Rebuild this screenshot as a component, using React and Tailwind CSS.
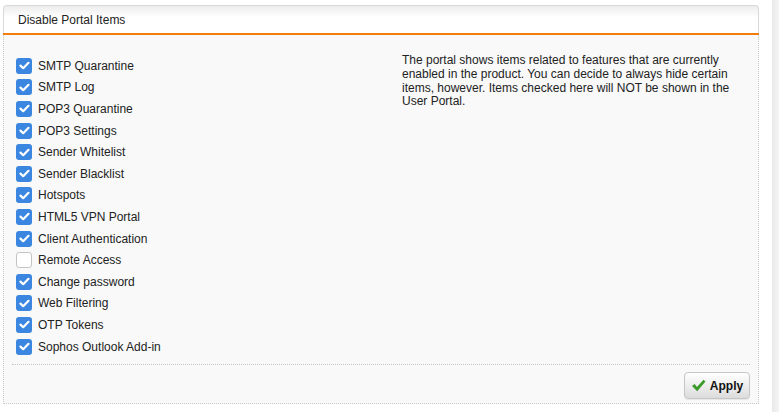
import React from 'react';

const items = [
    { label: 'SMTP Quarantine', checked: true },
    { label: 'SMTP Log', checked: true },
    { label: 'POP3 Quarantine', checked: true },
    { label: 'POP3 Settings', checked: true },
    { label: 'Sender Whitelist', checked: true },
    { label: 'Sender Blacklist', checked: true },
    { label: 'Hotspots', checked: true },
    { label: 'HTML5 VPN Portal', checked: true },
    { label: 'Client Authentication', checked: true },
    { label: 'Remote Access', checked: false },
    { label: 'Change password', checked: true },
    { label: 'Web Filtering', checked: true },
    { label: 'OTP Tokens', checked: true },
    { label: 'Sophos Outlook Add-in', checked: true },
];

const Box = ({ checked }) => (
    checked ? (
        <span className="w-4 h-4 rounded-[3px] bg-[#3a86e0] flex items-center justify-center shrink-0">
            <svg width="11" height="9" viewBox="0 0 11 9" fill="none">
                <path d="M1.5 4.6 L4.2 7.2 L9.5 1.8" stroke="white" strokeWidth="2.2" strokeLinecap="round" strokeLinejoin="round" />
            </svg>
        </span>
    ) : (
        <span className="w-4 h-4 rounded-[3px] bg-white border border-[#c4c4c4] shrink-0" />
    )
);

const App = () => {
    return (
        <div className="w-[779px] h-[412px] bg-white flex font-['Liberation_Sans',Arial,sans-serif] text-[12px] text-[#222] overflow-hidden">
            <div className="w-[756px] ml-[3px] mt-[5px] flex flex-col">
                {/* header */}
                <div className="h-[30px] rounded-t-[4px] border border-b-0 border-[#d9d9d9] bg-gradient-to-b from-[#ededed] to-white to-[40%] flex flex-col">
                    <div className="flex-1 flex items-center pl-[14px]">Disable Portal Items</div>
                    <div className="h-[2px] bg-[#f47c0a] -mx-px" />
                </div>

                {/* body */}
                <div className="h-[369px] bg-[#f9f9f9] border border-t-0 border-dotted border-[#c8c8c8] flex flex-col">
                    <div className="flex pt-[20px] h-[329px]">
                        <div className="w-[385px] pl-[12px] flex flex-col">
                            {items.map(it => (
                                <div key={it.label} className="h-[21.6px] flex items-center gap-[6px]">
                                    <Box checked={it.checked} />
                                    <span className="leading-none">{it.label}</span>
                                </div>
                            ))}
                        </div>
                        <div className="w-[353px] pl-[13px] -mt-px leading-[13.8px] text-[#222]">
                            The portal shows items related to features that are currently enabled in the product. You can decide to always hide certain items, however. Items checked here will NOT be shown in the User Portal.
                        </div>
                    </div>
                    <div className="mx-[8px] border-t border-dotted border-[#c4c4c4]" />
                    <div className="flex justify-end pr-[8px] pt-[7px]">
                        <button className="h-[27px] w-[66px] rounded-[4px] border border-[#c6c6c6] bg-gradient-to-b from-white to-[#dcdcdc] flex items-center justify-center gap-[4px] font-bold text-[12px] text-[#111] shadow-[0_1px_1px_rgba(0,0,0,0.08)]">
                            <svg width="15" height="13" viewBox="0 0 15 13">
                                <path d="M1 7 L3.6 5 L6 8 L12.5 0.8 L14.5 2.5 L6.2 12.2 Z" fill="#3a9a2a" />
                            </svg>
                            Apply
                        </button>
                    </div>
                </div>
            </div>
            <div className="flex-1" />
            <div className="w-[7px] h-full bg-gradient-to-r from-[#eaeaea] to-[#f4f4f4]" />
        </div>
    );
};

export default App;
